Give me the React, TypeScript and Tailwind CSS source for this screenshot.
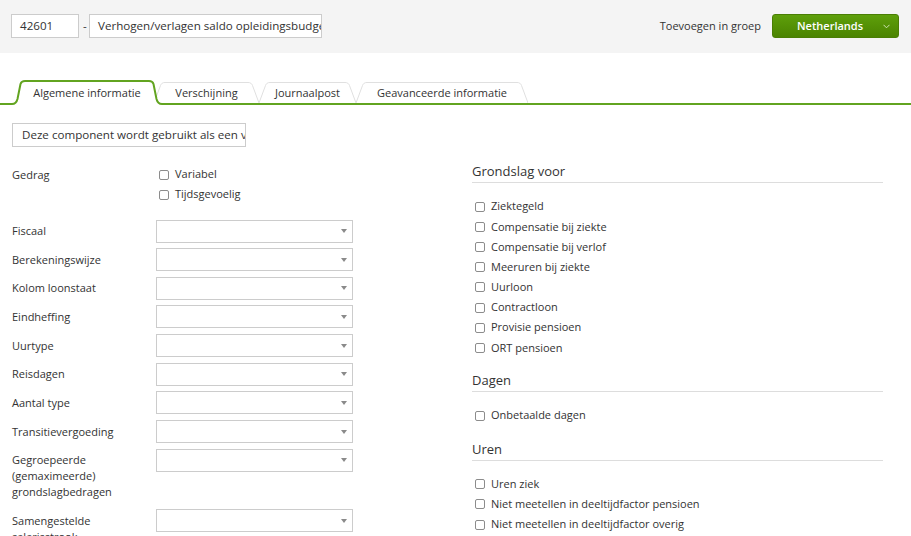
import React from "react";

const Box = () => (
  <span className="inline-block w-[10px] h-[10px] border border-[#8c8c8c] rounded-[2px] bg-white shrink-0" />
);

const Check = ({ label }: { label: string }) => (
  <div className="flex items-center gap-[6px] h-[20.2px]">
    <Box />
    <span>{label}</span>
  </div>
);

const Select = () => (
  <div className="w-[197px] h-[23px] border border-[#cccccc] bg-white flex items-center justify-end pr-[5px] shrink-0">
    <svg width="6" height="4" viewBox="0 0 6 4">
      <path d="M0 0H6L3 4Z" fill="#8a8a8a" />
    </svg>
  </div>
);

const Row = ({ label }: { label: string }) => (
  <div className="flex items-start">
    <div className="w-[144px] pt-[3.5px] pb-[3.5px] leading-[16px] pr-[20px]">{label}</div>
    <Select />
  </div>
);

const Heading = ({ children, className = "" }: { children: React.ReactNode; className?: string }) => (
  <div className={"text-[13px] leading-[19px] pb-[1px] border-b border-[#dddddd] text-[#333333] " + className}>
    {children}
  </div>
);

function Tab({ label, width, active, ml }: { label: string; width: number; active?: boolean; ml?: boolean }) {
  const W = width;
  if (active) {
    const edge = `M0,24 C3,24 4.5,23 5.5,19 L8.5,4 C9.2,1.8 10.5,1 13,1 L${W - 13},1 C${W - 10.5},1 ${W - 9.2},1.8 ${W - 8.5},4 L${W - 5.5},19 C${W - 4.5},23 ${W - 3},24 ${W},24`;
    return (
      <div className="relative z-10 h-[25px] -mb-[2px] shrink-0 flex items-center justify-center pt-[1px]" style={{ width: W }}>
        <svg className="absolute inset-0" width={W} height={25} viewBox={`0 0 ${W} 25`}>
          <path d={`${edge} L${W},25 L0,25 Z`} fill="#ffffff" />
          <path d={edge} fill="none" stroke="#62a420" strokeWidth="2" />
        </svg>
        <span className="relative">{label}</span>
      </div>
    );
  }
  const edge = `M0,21 L6.5,3.5 C7.3,1.5 8.5,0.5 11,0.5 L${W - 11},0.5 C${W - 8.5},0.5 ${W - 7.3},1.5 ${W - 6.5},3.5 L${W},21`;
  return (
    <div
      className={"relative h-[21px] shrink-0 flex items-center justify-center pt-[2px] " + (ml ? "-ml-[8px]" : "")}
      style={{ width: W }}
    >
      <svg className="absolute inset-0" width={W} height={21} viewBox={`0 0 ${W} 21`}>
        <path d={`${edge} Z`} fill="#ffffff" />
        <path d={edge} fill="none" stroke="#e0e0e0" strokeWidth="1" />
      </svg>
      <span className="relative">{label}</span>
    </div>
  );
}

export default function App() {
  const rows = [
    "Fiscaal",
    "Berekeningswijze",
    "Kolom loonstaat",
    "Eindheffing",
    "Uurtype",
    "Reisdagen",
    "Aantal type",
    "Transitievergoeding",
    "Gegroepeerde (gemaximeerde) grondslagbedragen",
    "Samengestelde salarisstrook",
  ];
  return (
    <div className="w-[911px] h-[536px] overflow-hidden bg-white text-[11px] text-[#333333] font-['Open_Sans','Noto_Sans',sans-serif]">
      {/* Header */}
      <div className="h-[53px] bg-[#f4f4f4] flex items-start justify-between pt-[14px] pl-[11px] pr-[12px]">
        <div className="flex items-center text-[11.6px]">
          <div className="w-[68px] h-[24px] border border-[#cccccc] bg-white pl-[8px] flex items-center">42601</div>
          <span className="w-[10px] pl-[4px]">-</span>
          <div className="w-[233px] h-[24px] border border-[#cccccc] bg-white pl-[8px] pr-[2px] flex items-center overflow-hidden whitespace-nowrap">
            Verhogen/verlagen saldo opleidingsbudget
          </div>
        </div>
        <div className="flex items-center h-[24px]">
          <span className="mr-[11px]">Toevoegen in groep</span>
          <div className="w-[127px] h-[24px] rounded-[3px] border border-[#4a7e04] bg-linear-to-b from-[#5e9f0b] to-[#4b8401] flex items-center pl-[24px] pr-[8px] text-white font-semibold">
            <span>Netherlands</span>
            <svg className="ml-auto" width="7" height="5" viewBox="0 0 7 5">
              <path d="M0.5 0.8L3.5 3.8L6.5 0.8" fill="none" stroke="#cfe3b5" strokeWidth="1" />
            </svg>
          </div>
        </div>
      </div>

      {/* Tabs */}
      <div className="mt-[27px] h-[25px] flex items-end border-b-2 border-[#62a420] pl-[12px]">
        <Tab label="Algemene informatie" width={150} active />
        <Tab label="Verschijning" width={105} ml />
        <Tab label="Journaalpost" width={97} />
        <Tab label="Geavanceerde informatie" width={172} />
      </div>

      {/* Content */}
      <div className="px-[12px]">
        <div className="mt-[18px] w-[234px] h-[24px] border border-[#cccccc] pl-[9px] flex items-center overflow-hidden whitespace-nowrap text-[11.6px]">
          Deze component wordt gebruikt als een verhoging
        </div>

        <div className="flex mt-[14.5px]">
          {/* Left */}
          <div className="w-[460px] pt-[3px]">
            <div className="flex">
              <div className="w-[144px] leading-[18px] pt-[1px]">Gedrag</div>
              <div className="pl-[3px] flex flex-col">
                <div className="flex items-center gap-[6px] h-[20px]">
                  <Box />
                  <span>Variabel</span>
                </div>
                <div className="flex items-center gap-[6px] h-[20px]">
                  <Box />
                  <span>Tijdsgevoelig</span>
                </div>
              </div>
            </div>
            <div className="mt-[15px] flex flex-col gap-[5.67px]">
              {rows.map((r) => (
                <Row key={r} label={r} />
              ))}
            </div>
          </div>

          {/* Right */}
          <div className="w-[411px]">
            <Heading>Grondslag voor</Heading>
            <div className="mt-[14px] pl-[3px]">
              <Check label="Ziektegeld" />
              <Check label="Compensatie bij ziekte" />
              <Check label="Compensatie bij verlof" />
              <Check label="Meeruren bij ziekte" />
              <Check label="Uurloon" />
              <Check label="Contractloon" />
              <Check label="Provisie pensioen" />
              <Check label="ORT pensioen" />
            </div>
            <Heading className="mt-[13px]">Dagen</Heading>
            <div className="mt-[13.5px] pl-[3px]">
              <Check label="Onbetaalde dagen" />
            </div>
            <Heading className="mt-[14.5px]">Uren</Heading>
            <div className="mt-[13px] pl-[3px]">
              <Check label="Uren ziek" />
              <Check label="Niet meetellen in deeltijdfactor pensioen" />
              <Check label="Niet meetellen in deeltijdfactor overig" />
            </div>
          </div>
        </div>
      </div>
    </div>
  );
}
